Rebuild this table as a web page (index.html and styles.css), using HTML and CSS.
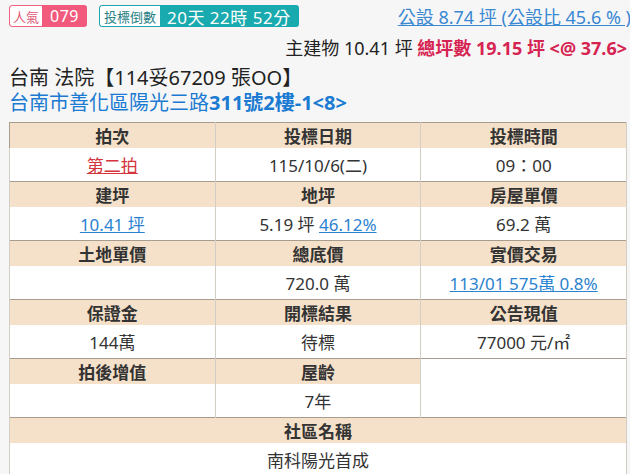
FILE: index.html
```html
<!DOCTYPE html>
<html lang="zh-Hant">
<head>
<meta charset="utf-8">
<link rel="stylesheet" href="styles.css">
</head>
<body>
<div class="page">
  <div class="top">
    <div class="badges">
      <span class="badge pink"><span class="lbl">人氣</span><span class="val">079</span></span>
      <span class="badge teal"><span class="lbl">投標倒數</span><span class="val">20天 22時 52分</span></span>
    </div>
    <a class="pub">公設 8.74 坪 (公設比 45.6 % )</a>
  </div>
  <div class="area">主建物 10.41 坪 <b class="tot">總坪數 19.15 坪 &lt;@ 37.6&gt;</b></div>
  <div class="title">台南 法院【114妥67209 張OO】</div>
  <div class="addr">台南市善化區陽光三路<b>311號2樓-1&lt;8&gt;</b></div>
  <table class="info">
    <tr class="hd"><th>拍次</th><th>投標日期</th><th>投標時間</th></tr>
    <tr class="dt"><td><a class="red">第二拍</a></td><td>115/10/6(二)</td><td>09：00</td></tr>
    <tr class="hd"><th>建坪</th><th>地坪</th><th>房屋單價</th></tr>
    <tr class="dt"><td><a class="blue">10.41 坪</a></td><td>5.19 坪 <a class="blue">46.12%</a></td><td>69.2 萬</td></tr>
    <tr class="hd"><th>土地單價</th><th>總底價</th><th>實價交易</th></tr>
    <tr class="dt"><td></td><td>720.0 萬</td><td><a class="blue">113/01 575萬 0.8%</a></td></tr>
    <tr class="hd"><th>保證金</th><th>開標結果</th><th>公告現值</th></tr>
    <tr class="dt"><td>144萬</td><td>待標</td><td>77000 元/㎡</td></tr>
    <tr class="hd"><th>拍後增值</th><th>屋齡</th><td rowspan="2" class="empty"></td></tr>
    <tr class="dt"><td></td><td>7年</td></tr>
    <tr class="hd"><th colspan="3">社區名稱</th></tr>
    <tr class="dt"><td colspan="3">南科陽光首成</td></tr>
  </table>
</div>
</body>
</html>
```
FILE: styles.css
```css
html, body { margin: 0; padding: 0; }
body {
  background: #f6f6f6;
  font-family: "Noto Sans", "Noto Sans CJK TC", sans-serif;
  color: #222;
  width: 630px;
  height: 474px;
  overflow: hidden;
}
.page { padding: 0 3px 0 9px; }
.top {
  display: flex;
  justify-content: space-between;
  align-items: center;
  height: 30px;
  padding-top: 1px;
}
.badges { display: flex; gap: 12px; align-items: center; }
.badge {
  display: inline-flex;
  height: 22px;
  border-radius: 3px;
  overflow: hidden;
  align-items: stretch;
}
.badge .lbl {
  display: flex; align-items: center;
  background: #fff;
  font-size: 13px;
  padding: 0 4px;
  border-radius: 3px 0 0 3px;
}
.badge .val {
  display: flex; align-items: center;
  color: #fff;
  padding: 0 7px;
  font-size: 16px;
  letter-spacing: 0.5px;
}
.pink .lbl { border: 1px solid #f0627f; border-right: 0; padding: 0 3px; color: #e05877; }
.pink .val { background: #f15a7d; padding: 0 8px; }
.teal .lbl { border: 1px solid #1aa7ab; border-right: 0; color: #287f85; }
.teal .val { background: #18aaae; font-size: 17px; padding: 0 8px 0 7px; }
.pub {
  color: #3888d2;
  text-decoration: underline;
  font-size: 18px;
  white-space: nowrap;
  margin-right: -4px;
}
.area {
  text-align: right;
  font-size: 18px;
  height: 28px;
  line-height: 34px;
  color: #222;
  white-space: nowrap;
}
.tot { color: #d62452; font-weight: 700; }
.title {
  font-size: 20px;
  line-height: 26px;
  margin-top: 6px;
  color: #222;
}
.addr {
  font-size: 20px;
  line-height: 24px;
  color: #1b7bd2;
}
.addr b { font-weight: 700; }
.info {
  margin-top: 7px;
  width: 618px;
  border-collapse: collapse;
  table-layout: fixed;
  background: #fff;
  font-size: 17px;
}
.info th, .info td {
  text-align: center;
  border-left: 1px solid #d2cec6;
  border-right: 1px solid #d2cec6;
  padding: 0;
}
.info tr.hd th, .info tr.hd td {
  border-top: 1px solid #a69d8e;
}
.info tr.hd th {
  background: #f5e1c9;
  height: 25px;
  font-weight: 700;
  color: #333;
}
.info tr.dt td { height: 33px; color: #333; }
.info td.empty { background: #fff; }
.info tr:first-child th { border-top: 1px solid #a69d8e; }
.info tr:first-child th:first-child { border-left-color: #a69d8e; }
a.red { color: #d3343d; text-decoration: underline; }
a.blue { color: #2a82d0; text-decoration: underline; }
```
